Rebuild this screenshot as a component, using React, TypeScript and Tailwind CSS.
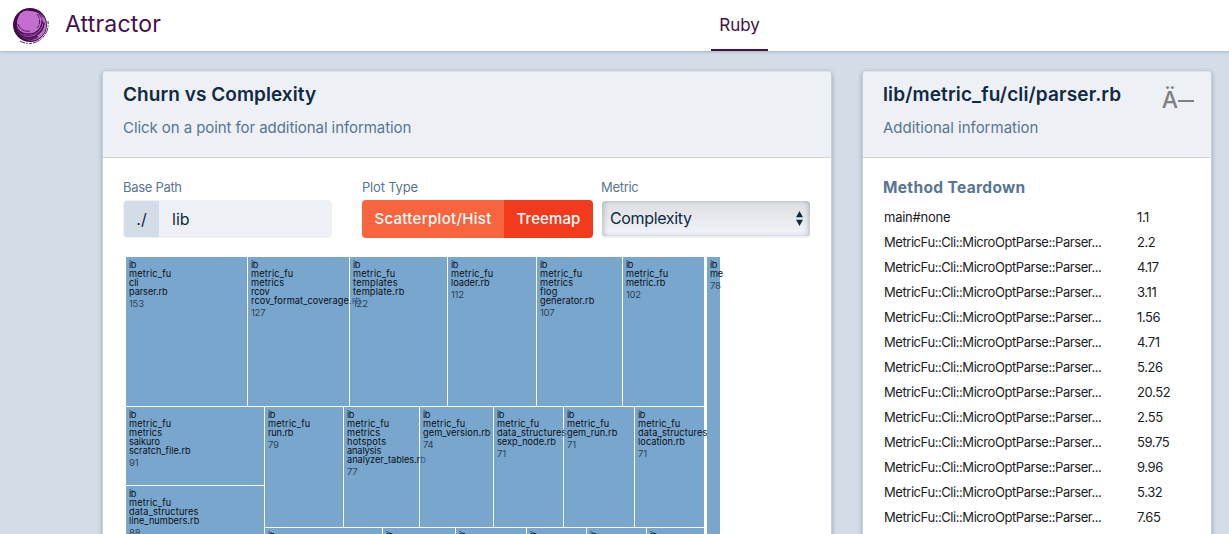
type Cell = { x: number; y: number; w: number; h: number; lines: string[]; value?: number };

const cells: Cell[] = [
  { x: 0, y: 0, w: 121, h: 149, lines: ["ib", "metric_fu", "cli", "parser.rb"], value: 153 },
  { x: 122, y: 0, w: 101, h: 149, lines: ["ib", "metric_fu", "metrics", "rcov", "rcov_format_coverage.rb"], value: 127 },
  { x: 224, y: 0, w: 97, h: 149, lines: ["ib", "metric_fu", "templates", "template.rb"], value: 122 },
  { x: 322, y: 0, w: 88, h: 149, lines: ["ib", "metric_fu", "loader.rb"], value: 112 },
  { x: 411, y: 0, w: 85, h: 149, lines: ["ib", "metric_fu", "metrics", "flog", "generator.rb"], value: 107 },
  { x: 497, y: 0, w: 81, h: 149, lines: ["ib", "metric_fu", "metric.rb"], value: 102 },
  { x: 0, y: 150, w: 138, h: 78, lines: ["ib", "metric_fu", "metrics", "saikuro", "scratch_file.rb"], value: 91 },
  { x: 0, y: 229, w: 138, h: 80, lines: ["ib", "metric_fu", "data_structures", "line_numbers.rb"], value: 88 },
  { x: 139, y: 150, w: 78, h: 120, lines: ["ib", "metric_fu", "run.rb"], value: 79 },
  { x: 218, y: 150, w: 75, h: 120, lines: ["ib", "metric_fu", "metrics", "hotspots", "analysis", "analyzer_tables.rb"], value: 77 },
  { x: 294, y: 150, w: 73, h: 120, lines: ["ib", "metric_fu", "gem_version.rb"], value: 74 },
  { x: 368, y: 150, w: 69, h: 120, lines: ["ib", "metric_fu", "data_structures", "sexp_node.rb"], value: 71 },
  { x: 438, y: 150, w: 70, h: 120, lines: ["ib", "metric_fu", "gem_run.rb"], value: 71 },
  { x: 509, y: 150, w: 69, h: 120, lines: ["ib", "metric_fu", "data_structures", "location.rb"], value: 71 },
  { x: 139, y: 271, w: 117, h: 60, lines: ["ib"] },
  { x: 257, y: 271, w: 72, h: 60, lines: ["ib"] },
  { x: 330, y: 271, w: 70, h: 60, lines: ["ib"] },
  { x: 401, y: 271, w: 59, h: 60, lines: ["ib"] },
  { x: 461, y: 271, w: 59, h: 60, lines: ["ib"] },
  { x: 521, y: 271, w: 57, h: 60, lines: ["ib"] },
  { x: 581, y: 0, w: 13, h: 330, lines: ["ib", "me"], value: 78 },
];

const widths: Record<string, number> = {
  ib: 7.5,
  metric_fu: 42.3,
  cli: 9.5,
  "parser.rb": 38.7,
  metrics: 33,
  rcov: 18.7,
  "rcov_format_coverage.rb": 110,
  templates: 44.5,
  "template.rb": 51.3,
  "loader.rb": 38.7,
  flog: 17.5,
  "generator.rb": 54.3,
  "metric.rb": 39.5,
  saikuro: 31,
  "scratch_file.rb": 61.7,
  data_structures: 69.3,
  "line_numbers.rb": 70.3,
  "run.rb": 25.5,
  hotspots: 39,
  analysis: 34.3,
  "analyzer_tables.rb": 79,
  "gem_version.rb": 67.5,
  "sexp_node.rb": 59,
  "gem_run.rb": 50.3,
  "location.rb": 47,
  me: 13,
};

const methods: [string, string][] = [
  ["main#none", "1.1"],
  ["MetricFu::Cli::MicroOptParse::Parser...", "2.2"],
  ["MetricFu::Cli::MicroOptParse::Parser...", "4.17"],
  ["MetricFu::Cli::MicroOptParse::Parser...", "3.11"],
  ["MetricFu::Cli::MicroOptParse::Parser...", "1.56"],
  ["MetricFu::Cli::MicroOptParse::Parser...", "4.71"],
  ["MetricFu::Cli::MicroOptParse::Parser...", "5.26"],
  ["MetricFu::Cli::MicroOptParse::Parser...", "20.52"],
  ["MetricFu::Cli::MicroOptParse::Parser...", "2.55"],
  ["MetricFu::Cli::MicroOptParse::Parser...", "59.75"],
  ["MetricFu::Cli::MicroOptParse::Parser...", "9.96"],
  ["MetricFu::Cli::MicroOptParse::Parser...", "5.32"],
  ["MetricFu::Cli::MicroOptParse::Parser...", "7.65"],
];

function Logo() {
  return (
    <svg className="h-[38px] w-[38px] shrink-0" viewBox="0 0 38 38" fill="none">
      <path d="M36 14c1 8-2 14-7 18-6 5-15 6-21 2" stroke="#410d49" strokeWidth="0.9" strokeDasharray="3 1.5 1.5 1 7 1" />
      <circle cx="18" cy="18" r="17" fill="#410d49" />
      <ellipse cx="19.2" cy="18.2" rx="15" ry="15.2" fill="#c36fd0" />
      <path d="M3 20C1 9 9 2 18 2c7 0 12 4 14 10-4-7-9-8-16-8C8 4 4 11 5 18z" fill="#410d49" />
      <g stroke="#410d49" strokeWidth="0.9">
        <path d="M4 15c0 9 6 12 13 12 8 0 13-6 13-13" strokeWidth="1.3" />
        <path d="M4 19c3 8 9 11 16 9 7-1 12-7 12-13" />
        <path d="M4 22c5 8 12 10 19 7 6-3 9-8 9-13" strokeWidth="1.2" />
        <path d="M5 25c6 7 14 8 20 4M7 28c6 5 13 5 19 1" />
        <path d="M25 7c4 5 3 11 0 14M27 7c6 7 3 14-3 18" strokeDasharray="5 1" />
        <path d="M6 17c2 6 7 8 12 7M10 31c5 3 11 2 16-1" />
      </g>
      <circle cx="15.2" cy="12.8" r="9.2" fill="#c36fd0" />
    </svg>
  );
}

function Treemap() {
  return (
    <svg className="block h-[277px] w-[600px]" viewBox="0 0 600 277" fontFamily="Inter, sans-serif" fontSize="9.2">
      {cells.map((c, i) => (
        <g key={i}>
          <rect x={c.x} y={c.y} width={c.w} height={c.h} fill="#4182b8" fillOpacity="0.71" />
          {c.lines.map((line, n) => (
            <text key={n} x={c.x + 3} y={c.y + 11 + n * 9} textLength={widths[line]} fill="#0b0f14">
              {line}
            </text>
          ))}
          {c.value && (
            <text x={c.x + 3} y={c.y + 14 + c.lines.length * 9} fontSize="9.6" letterSpacing="-0.3" fill="#0b0f14" fillOpacity="0.7">
              {c.value}
            </text>
          )}
        </g>
      ))}
    </svg>
  );
}

export default function App() {
  return (
    <div className="flex h-[534px] w-[1229px] flex-col overflow-hidden bg-[#d3dde7] font-['Inter',sans-serif] text-[#102a43]">
      <header className="z-10 flex h-[51px] shrink-0 bg-white shadow-[0_1px_3px_rgba(72,101,129,0.35)]">
        <div className="flex w-[711px] items-start pl-3 pt-[7px]">
          <Logo />
          <span className="ml-[15px] mt-px text-[23px] leading-[32px] tracking-[0.2px] text-[#44104b]">Attractor</span>
        </div>
        <div className="flex w-[57px] justify-center border-b-2 border-[#44104b] pt-[13px] text-[17px] leading-6 text-[#44104b]">Ruby</div>
      </header>

      <main className="flex min-h-0 flex-1 items-start gap-[30px] pl-[102px] pt-5">
        <section className="h-[600px] w-[730px] shrink-0 overflow-hidden rounded-t border border-[#c6d0db] border-t-[#dfe4ea] bg-white shadow-[0_1px_4px_rgba(50,75,105,0.4)]">
          <div className="h-[86px] border-b border-[#ccd3da] bg-[#edf0f5] px-5 pt-[9px]">
            <h2 className="whitespace-nowrap text-[19px] font-semibold leading-7 tracking-[0.05px]">Churn vs Complexity</h2>
            <p className="mt-[7px] whitespace-nowrap text-[15px] leading-6 tracking-[-0.07px] text-[#587691]">Click on a point for additional information</p>
          </div>

          <div className="flex px-5 pt-[21px]">
            <div className="w-[239px]">
              <div className="text-[13px] leading-[17px] tracking-[-0.3px] text-[#587691]">Base Path</div>
              <div className="mt-1 flex h-[38px] w-[209px] overflow-hidden rounded border border-[#edf0f5] bg-[#edf1f6] text-base">
                <span className="flex w-[35px] items-center justify-center bg-[#d3dde7]">./</span>
                <span className="flex items-center pl-[13px] pb-px">lib</span>
              </div>
            </div>
            <div className="w-[239px]">
              <div className="text-[13px] leading-[17px] tracking-[-0.2px] text-[#587691]">Plot Type</div>
              <div className="mt-1 flex h-[38px] w-[231px] overflow-hidden rounded text-[15px] font-medium text-white">
                <button className="w-[142px] whitespace-nowrap bg-[#f7643e] tracking-[0.3px]">Scatterplot/Hist</button>
                <button className="w-[89px] whitespace-nowrap bg-[#f23a1c] tracking-[0.1px]">Treemap</button>
              </div>
            </div>
            <div className="w-[209px]">
              <div className="text-[13px] leading-[17px] tracking-[-0.3px] text-[#587691]">Metric</div>
              <div className="ml-px mt-[5px] flex h-[37px] items-center justify-between rounded border-b-2 border-[#eceff4] bg-linear-to-b from-[#dcdee1] to-[#f1f4fa] pl-2 pr-[7px] text-base shadow-[inset_3px_0_4px_-1px_rgba(90,100,115,0.3),inset_-3px_0_4px_-1px_rgba(90,100,115,0.3)]">
                <span className="pb-px tracking-[-0.35px]">Complexity</span>
                <svg className="h-[15px] w-[7px]" viewBox="0 0 7 15" fill="#102a43">
                  <path d="M3.5 0 7 6.2H0zM0 8.8h7L3.5 15z" />
                </svg>
              </div>
            </div>
          </div>

          <div className="pl-[23px] pt-[19px]">
            <Treemap />
          </div>
        </section>

        <section className="h-[600px] w-[350px] shrink-0 overflow-hidden rounded-t border border-[#c6d0db] border-t-[#dfe4ea] bg-white shadow-[0_1px_4px_rgba(50,75,105,0.4)]">
          <div className="flex h-[86px] justify-between border-b border-[#ccd3da] bg-[#edf0f5] pl-5 pr-[17px] pt-[9px]">
            <div>
              <h2 className="whitespace-nowrap text-[19px] font-semibold leading-7 tracking-[0.13px]">lib/metric_fu/cli/parser.rb</h2>
              <p className="mt-[7px] whitespace-nowrap text-[15px] leading-6 text-[#587691]">Additional information</p>
            </div>
            <div className="flex pt-[3px] text-[23px] leading-8 text-[#7f8082]">
              <span className="font-medium">Ä</span>
              <span className="mt-[16px] h-0.5 w-4 bg-[#7f8082]" />
            </div>
          </div>
          <div className="px-5 pt-[18px]">
            <h3 className="text-[15.5px] font-bold leading-6 tracking-[0.35px] text-[#587691]">Method Teardown</h3>
            <div className="mt-[5px] text-[13px] text-[#1b1c1e]">
              {methods.map(([name, score], i) => (
                <div key={i} className="flex h-[25px] items-center whitespace-nowrap pl-px">
                  <span className={i === 0 ? "w-[253px] tracking-[-0.25px]" : "w-[253px] tracking-[-0.44px]"}>{name}</span>
                  <span className="tracking-[-0.4px]">{score}</span>
                </div>
              ))}
            </div>
          </div>
        </section>
      </main>
    </div>
  );
}
